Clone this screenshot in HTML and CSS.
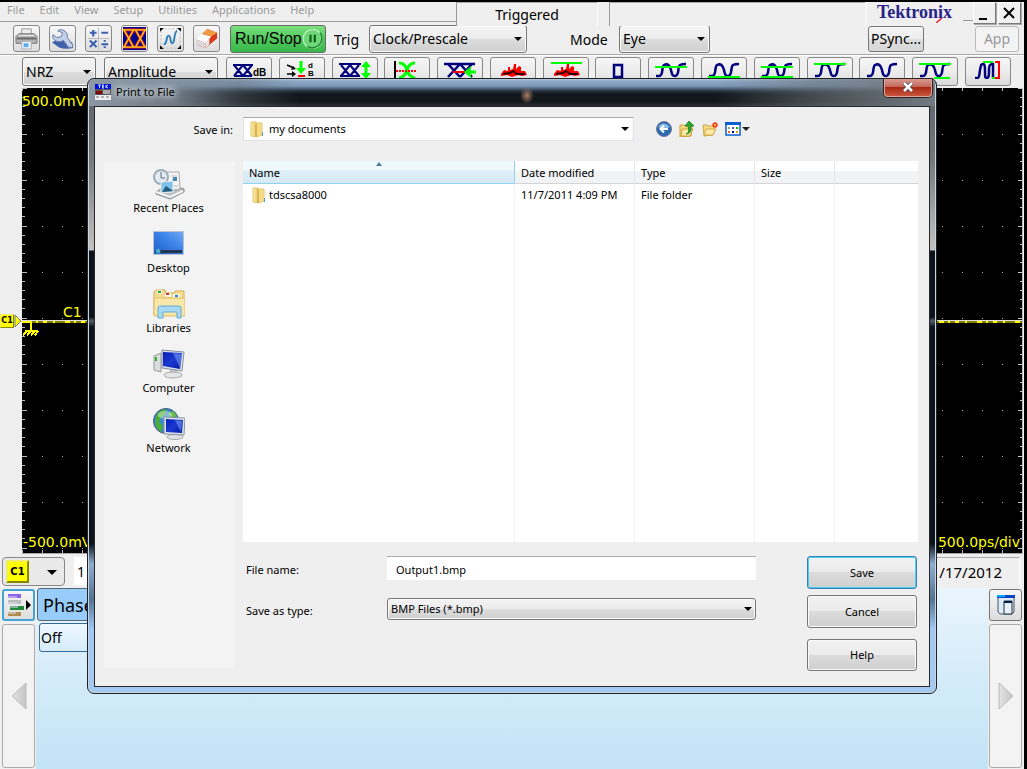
FILE: index.html
```html
<!DOCTYPE html>
<html lang="en">
<head>
<meta charset="utf-8">
<title>Print to File</title>
<link rel="stylesheet" href="styles.css">
</head>
<body>
<svg class="defs" aria-hidden="true">
  <defs>
    <linearGradient id="folderFill" x1="0" x2="1"><stop offset="0" stop-color="#fdf0b4"/><stop offset=".45" stop-color="#e8c664"/><stop offset="1" stop-color="#f9e498"/></linearGradient>
    <linearGradient id="screenFill" x1="0" y1="0" x2="1" y2="1"><stop offset="0" stop-color="#0a1fb4"/><stop offset=".5" stop-color="#1a38d0"/><stop offset="1" stop-color="#0718a0"/></linearGradient>
    <linearGradient id="deskFill" x1="0" y1="1" x2="1" y2="0"><stop offset="0" stop-color="#1a5cc8"/><stop offset=".6" stop-color="#3f86ea"/><stop offset="1" stop-color="#74aaf2"/></linearGradient>
    <linearGradient id="triFill"><stop offset="0" stop-color="#e4e4e4"/><stop offset="1" stop-color="#c4c4c4"/></linearGradient>
    <symbol id="folder" viewBox="0 0 14 17"><path d="M1 1h5l1 1h5v12l-5 2-6-1z" fill="url(#folderFill)" stroke="#e2c56e"/><path d="M6 3v13" stroke="#c9a040"/><path d="M7 3l3-1v13l-3 1z" fill="#f3d984"/><path d="M12.500 11v4" stroke="#4c9be0"/></symbol>
    <symbol id="wave" viewBox="0 0 34 18"><path d="M2 15h3c5 0 2-9 5-11 4-2 6 1 7 5s1 6 4 6c5 0 2-9 5-11 2-1 4-1 6-1" fill="none" stroke="#00007c" stroke-width="2.500"/></symbol>
    <symbol id="eye" viewBox="0 0 34 18"><path d="M1 3h31M5 3l12 13M17 3L5 16M17 3l12 13M29 3L17 16" fill="none" stroke="#00007c" stroke-width="2.500"/></symbol>
    <symbol id="noise" viewBox="0 0 34 18"><path d="M5 13l3-4 4 1V6h2v3l3-1 1-5h2v5l3-3 2 1v4h4l2 4-5 1-4-1-6 2-5-2-6 1z" fill="#f00"/><path d="M7 13l7-1 3-2 4 3h8" fill="none" stroke="#300" stroke-width="2"/></symbol>
  </defs>
</svg>
<div class="app">
  <header class="menubar">
    <nav class="menus"><button>File</button><button>Edit</button><button>View</button><button>Setup</button><button>Utilities</button><button>Applications</button><button>Help</button></nav>
    <div class="trig-state">Triggered</div>
    <div class="blank-state"></div>
    <div class="brand"><span class="logo">Tektronix<svg class="slash" viewBox="0 0 6 5"><path d="M0 5L6 0" stroke="#e8283c" stroke-width="1.500"/></svg></span>
      <span class="winbtns"><button class="winbtn" aria-label="Minimize"><svg viewBox="0 0 20 18"><path d="M5 15h8" stroke="#000" stroke-width="2"/></svg></button><button class="winbtn" aria-label="Close"><svg viewBox="0 0 20 18"><path d="M5 4l10 10M15 4L5 14" stroke="#000" stroke-width="2"/></svg></button></span>
    </div>
  </header>

  <div class="toolbar">
    <button class="tool" aria-label="Print"><svg viewBox="0 0 24 24"><path d="M7 2h10v8H7z" fill="#eee" stroke="#999"/><path d="M1 10l3-3h16l3 3v7H1z" fill="#b3b3b3" stroke="#777"/><path d="M2 11h20v2H2z" fill="#666"/><path d="M4 9h16" stroke="#eee"/><path d="M7 15h10v8H7z" fill="#e9f4ff" stroke="#aaa"/><path d="M9 17h5v4H9z" fill="#5aa9e8"/></svg></button>
    <button class="tool" aria-label="Setup"><svg viewBox="0 0 24 24"><path d="M1 16q11-7 21 0l1 6q-9 2-15-1z" fill="#3e62ad"/><path d="M2 8q-1 5 4 7 4 1 7-1l5 7q4 2 5-2l-6-8q1-6-5-8-3-1-5 1l5 2-1 4-5 1z" fill="#c3d0ea" stroke="#687aa5"/></svg></button>
    <button class="tool" aria-label="Math"><svg viewBox="0 0 24 24"><path d="M12 1v22M1 12h22" stroke="#bbb"/><path d="M3 6h7M6.500 3v7M15 6h7M3 14l7 7M10 14l-7 7M15 18h7M18.500 13.500v2M18.500 20v2" stroke="#3a5fb0" stroke-width="2.200"/></svg></button>
    <button class="tool" aria-label="Eye display"><svg viewBox="0 0 24 24"><path d="M0 0h24v24H0z" fill="#00008c"/><path d="M0 3h24M0 21h24M1 3l10 18M11 3L1 21M13 3l10 18M23 3L13 21" fill="none" stroke="#e21a1a" stroke-width="3"/><path d="M0 3h24M0 21h24M1 3l10 18M11 3L1 21M13 3l10 18M23 3L13 21" fill="none" stroke="#ffd21c" stroke-width="1.200"/></svg></button>
    <button class="tool" aria-label="Autoset"><svg viewBox="0 0 24 24"><path d="M2 2h20v20H2z" fill="none" stroke="#bbb" stroke-dasharray="2 2"/><path d="M5 18c4 0 2-9 5-9s1 8 4 8 1-12 5-13" fill="none" stroke="#2e7fb5" stroke-width="2"/><path d="M1 5V1h4zM19 1h4v4zM1 19v4h4zM23 19v4h-4z" fill="#000"/></svg></button>
    <button class="tool" aria-label="Clear"><svg viewBox="0 0 24 24"><path d="M2 14L13 2l10 4v6L11 22l-9-3z" fill="#d8391b"/><path d="M2 13l5-6 10 3-6 7z" fill="#fff"/><path d="M2 13l9 4v5l-9-3z" fill="#d8d8dd"/><path d="M7 7l6-5 10 4-6 4z" fill="#ef9a44"/><path d="M11 17l4-5v6l-4 4z" fill="#e8e8e8"/></svg></button>
    <button class="run">Run/Stop <svg viewBox="0 0 20 20"><circle cx="10" cy="10" r="9" fill="#6fd67a" stroke="#c9f3cc"/><path d="M17 4a9 9 0 0 1-12 13" fill="none" stroke="#1f8a30" stroke-width="1.500"/><path d="M8 6v7M12 6v7" stroke="#075e14" stroke-width="2"/></svg></button>
    <label class="lbl" for="trig">Trig</label>
    <span class="sel trig"><select id="trig"><option>Clock/Prescale</option></select></span>
    <label class="lbl mode-lbl" for="mode">Mode</label>
    <span class="sel mode"><select id="mode"><option>Eye</option></select></span>
    <button class="text-btn psync">PSync...</button>
    <button class="text-btn app-btn" disabled>App</button>
  </div>

  <div class="measbar">
    <span class="sel nrz"><select aria-label="Signal type"><option>NRZ</option></select></span>
    <span class="sel amp"><select aria-label="Measurement group"><option>Amplitude</option></select></span>
    <div class="meas">
      <button aria-label="Extinction ratio dB"><svg viewBox="0 0 34 18"><path d="M1 4h20M2 4l9 11M11 4L2 15M11 4l9 11M20 4l-9 11M2 15h18" fill="none" stroke="#00007c" stroke-width="2"/><text x="21" y="15" class="ic">dB</text></svg></button>
      <button aria-label="Ratio dB"><svg viewBox="0 0 34 18"><path d="M2 4l7 3M2 13h8" stroke="#000" stroke-width="1.500"/><path d="M11 8L6 9l2-4zM11 13l-4-3v6z"/><path d="M16 0v10" stroke="#0f0" stroke-width="3"/><path d="M11 7h10l-5 6z" fill="#0f0"/><path d="M13 15h7" stroke="red" stroke-width="2"/><text x="23" y="7" class="ic small">d</text><text x="23" y="15" class="ic small">B</text></svg></button>
      <button aria-label="Eye height"><svg viewBox="0 0 34 18"><path d="M1 3h22M3 4l9 11M12 4L3 15M12 4l9 11M21 4l-9 11M2 15h20" fill="none" stroke="#00007c" stroke-width="2"/><path d="M28 4v10" stroke="#0f0" stroke-width="3"/><path d="M23 6h10l-5-6zM23 12h10l-5 6z" fill="#0f0"/></svg></button>
      <button aria-label="Crossing"><svg viewBox="0 0 34 18"><path d="M5 0v18" stroke="#000" stroke-width="2"/><path d="M9 2q6 0 8 7t8 8M25 2q-6 0-8 7t-8 8" fill="none" stroke="#0f0" stroke-width="3"/><path d="M6 10h21" stroke="red" stroke-width="2" stroke-dasharray="2 1"/></svg></button>
      <button aria-label="Eye level"><svg viewBox="0 0 34 18"><use href="#eye" width="34" height="18"/><path d="M10 11h12" stroke="red" stroke-width="2"/><path d="M24 11h9" stroke="#0f0" stroke-width="3"/><path d="M21 11l7-6v12z" fill="#0f0"/></svg></button>
      <button aria-label="Noise"><svg viewBox="0 0 34 18"><use href="#noise" width="34" height="18"/></svg></button>
      <button aria-label="Peak noise"><svg viewBox="0 0 34 18"><use href="#noise" width="34" height="18"/><path d="M2 2h31" stroke="#0f0" stroke-width="2"/></svg></button>
      <button aria-label="Area"><svg viewBox="0 0 34 18"><path d="M13 4h8v12h-8z" fill="none" stroke="#00007c" stroke-width="2.500"/></svg></button>
      <button aria-label="Top level"><svg viewBox="0 0 34 18"><use href="#wave" width="34" height="18"/><path d="M1 6h32" stroke="#0f0" stroke-width="2"/></svg></button>
      <button aria-label="Base level"><svg viewBox="0 0 34 18"><use href="#wave" width="34" height="18"/><path d="M1 16h32" stroke="#0f0" stroke-width="2"/></svg></button>
      <button aria-label="Level width"><svg viewBox="0 0 34 18"><use href="#wave" width="34" height="18"/><path d="M1 6h32M1 16h32" stroke="#0f0" stroke-width="2"/></svg></button>
      <button aria-label="Maximum"><svg viewBox="0 0 34 18"><use href="#wave" width="34" height="18"/><path d="M1 3h32" stroke="#0f0" stroke-width="2"/></svg></button>
      <button aria-label="Waveform"><svg viewBox="0 0 34 18"><use href="#wave" width="34" height="18"/></svg></button>
      <button aria-label="Peak to peak"><svg viewBox="0 0 34 18"><use href="#wave" width="34" height="18"/><path d="M1 3h32M16 17h16" stroke="#0f0" stroke-width="2"/></svg></button>
      <button aria-label="Cycle"><svg viewBox="0 0 34 18"><path d="M4 17h2c3 0 2-3 3-8s1-6 3-6 2 3 2 8 0 6 2 6 2-3 2-8 1-6 4-6v14" fill="none" stroke="#00007c" stroke-width="2.500"/><path d="M12 1h10M21 17h6" stroke="#0f0" stroke-width="2"/><path d="M24 1h4v16h-4" fill="none" stroke="red" stroke-width="2"/></svg></button>
    </div>
  </div>

  <main class="scope-row">
    <div class="gutter"><span class="chan">C1</span><svg viewBox="0 0 8 14"><path d="M1 1l6 6-6 6z" fill="#ff0" stroke="#777"/></svg></div>
    <div class="scope">
      <svg class="graticule">
        <defs>
          <pattern id="dots" width="20" height="46" patternUnits="userSpaceOnUse"><rect width="1" height="1" fill="#aaa"/></pattern>
          <pattern id="left" width="6" height="46" patternUnits="userSpaceOnUse"><path d="M0 .5h5M0 9.500h3M0 18.500h3M0 27.500h3M0 36.500h3" stroke="#bbb"/></pattern>
          <pattern id="right" x="-6" width="6" height="46" patternUnits="userSpaceOnUse"><path d="M2 .5h4M4 9.500h2M4 18.500h2M4 27.500h2M4 36.500h2" stroke="#ccc"/></pattern>
          <pattern id="cols" width="20" height="4" patternUnits="userSpaceOnUse"><rect width="1" height="3" fill="#bbb"/></pattern>
          <pattern id="fuzz" width="38" height="2" patternUnits="userSpaceOnUse"><path d="M0 .5h38M5 1.500h5M14 1.500h2M21 1.500h4M31 1.500h2" stroke="#ff0"/></pattern>
        </defs>
        <rect width="100%" height="100%" fill="url(#dots)"/>
        <rect width="6" height="100%" fill="url(#left)"/>
        <rect width="100%" height="3" fill="url(#cols)"/>
        <svg y="100%" overflow="visible"><g transform="translate(0 -3)"><rect width="100%" height="3" fill="url(#cols)"/></g></svg>
        <svg x="100%" overflow="visible"><rect x="-6" width="6" height="465" fill="url(#right)"/></svg>
        <svg class="mid" y="50%" overflow="visible"><rect y="-1" width="100%" height="1" fill="#ddd"/><rect width="100%" height="2" fill="url(#fuzz)"/><path d="M0 1h10M9 1v9M3 10h13M5 10l-4 5M9 10l-4 5M13 10l-4 5M16 10l-3 5" fill="none" stroke="#ff0" stroke-width="2"/></svg>
      </svg>
      <span class="volts top">500.0mV</span>
      <span class="chan-name">C1</span>
      <div class="bottom-read"><span>-500.0mV</span><span>500.0ps/div</span></div>
    </div>
  </main>

  <div class="status">
    <button class="chan-pick" aria-label="Channel"><span class="chan big">C1</span></button>
    <input class="scale" aria-label="Scale" value="1">
    <span class="date">/17/2012</span>
  </div>

  <section class="lower">
    <div class="side">
      <button class="mini active" aria-label="Show list"><svg viewBox="0 0 24 24"><path d="M1 1h13v4H1z" fill="#8a63e8"/><path d="M1 7h13v4H1z" fill="#bbb"/><path d="M3 13h14v4H3z" fill="#208a3a"/><path d="M1 19h13v4H1z" fill="#b08d4c"/><path d="M1 4h9M1 10h9M3 14h8M1 20h8" stroke="#e5e0f5"/><path d="M19 7l5 5-5 5z"/></svg></button>
      <button class="scroll" aria-label="Scroll left"><svg viewBox="0 0 16 28"><path d="M15 1v26L1 14z" fill="url(#triFill)" stroke="#bbb"/></svg></button>
    </div>
    <div class="panel"><div class="phase">Phase</div><div class="off">Off</div></div>
    <div class="side">
      <button class="mini" aria-label="Windows"><svg viewBox="0 0 24 24"><path d="M4 3h16v16l-2 2H6l-2-2z" fill="#dcebf6" stroke="#456"/><path d="M3 2h18v3H3z" fill="#04c"/><path d="M3 2h8v2H3z" fill="#0af"/><path d="M10 8h8v13h-8z" fill="#e8f1f8" stroke="#234"/><path d="M10 8h8v2h-8z" fill="#024"/></svg></button>
      <button class="scroll" aria-label="Scroll right"><svg viewBox="0 0 16 28"><path d="M1 1v26l14-13z" fill="url(#triFill)" stroke="#bbb"/></svg></button>
    </div>
  </section>

  <div class="dialog" role="dialog" aria-labelledby="dlg-title">
    <div class="titlebar">
      <svg class="tek" viewBox="0 0 16 16"><path d="M0 0h16v5H0z" fill="#0010d8"/><path d="M3 1h3M4.500 1v3M7 1h2M7 2.500h2M7 4h2M7.500 1v3M11 1v3M13 1l-2 1.500 2 1.500" stroke="#cdf" fill="none"/><path d="M0 5h16v6H0z" fill="#555"/><path d="M1 7h6v3H1z" fill="#700"/><path d="M2 8h1M5 8h1" stroke="red"/><path d="M8 6h7v4H8z" fill="#aaa"/><path d="M0 11h16v5H0z" fill="#eee"/><path d="M1 13h14" stroke="#777" stroke-dasharray="3 2"/></svg>
      <h1 id="dlg-title">Print to File</h1>
      <i class="glint"></i>
      <button class="close" aria-label="Close"><svg viewBox="0 0 12 10"><path d="M2 1l8 8M10 1L2 9" stroke="#445" stroke-width="4"/><path d="M2 1l8 8M10 1L2 9" stroke="#fff" stroke-width="2.500"/></svg></button>
    </div>
    <form class="client">
      <div class="lookin">
        <label for="savein">Save in:</label>
        <span class="sel where"><svg class="folder"><use href="#folder"/></svg><select id="savein"><option>my documents</option></select></span>
        <div class="navbtns">
          <button type="button" aria-label="Back"><svg viewBox="0 0 16 16"><circle cx="8" cy="8" r="7.500" fill="#2a6ab0" stroke="#779"/><path d="M2 6q5-7 12 0-6 3-12 0z" fill="#8cbbe6"/><path d="M12 8H5M8 4.500L4.500 8 8 11.500" fill="none" stroke="#fff" stroke-width="2"/></svg></button>
          <button type="button" aria-label="Up one level"><svg viewBox="0 0 16 16"><path d="M1 4h4l1 1h7l-1 10-11 1z" fill="#f6dc7c" stroke="#caa03a"/><path d="M3 8h11l-3 7H2z" fill="#fbeaa4" stroke="#caa03a"/><path d="M7 13q4-1 2-8H6l4-5 5 5h-3q1 8-5 8z" fill="#25a82d" stroke="#15701c" stroke-width=".7"/></svg></button>
          <button type="button" aria-label="New folder"><svg viewBox="0 0 16 16"><path d="M1 4h4l1 1h6l-1 9-9 1z" fill="#f6dc7c" stroke="#d0a84a"/><path d="M4 8h10l-3 6H2z" fill="#fbeaa4" stroke="#d0a84a"/><path d="M13 1v6M10 4h6M11 2l4 4M15 2l-4 4" stroke="#f0402a" stroke-width="1.500"/><circle cx="13" cy="4" r="1" fill="#ffd43a"/></svg></button>
          <button type="button" class="views" aria-label="View menu"><svg viewBox="0 0 25 16"><path d="M1 2h14v12H1z" fill="#fff" stroke="#0a5fd0" stroke-width="1.500"/><path d="M0 1h16v3H0z" fill="#0a5fd0"/><path d="M3 6h2v2H3z" fill="#999"/><path d="M7 6h2v2H7z" fill="#55b"/><path d="M11 6h2v2h-2z" fill="#2a2"/><path d="M3 10h2v2H3z" fill="#e64"/><path d="M7 10h2v2H7z" fill="#008"/><path d="M11 10h2v2h-2z" fill="#e92"/><path d="M17 6h8l-4 4z" fill="#222"/></svg></button>
        </div>
      </div>
      <div class="body">
        <nav class="places">
          <button type="button"><svg viewBox="0 0 32 32"><path d="M3 24l12-8 16 5v3l-14 7-14-5z" fill="#b9bdc0" stroke="#888"/><path d="M13 4h13l1 17-13 2z" fill="#f5f5f5" stroke="#aaa"/><path d="M18 8h6M19 12h3M20 18h5" stroke="#bbb"/><path d="M20 9h4v4h-4z" fill="#48b"/><circle cx="8" cy="9" r="7" fill="#e4ebf0" stroke="#9eacb8" stroke-width="2"/><path d="M8 4v6h4" fill="none" stroke="#668"/><path d="M8 14l12-1v11l-12 1z" fill="#7fc2ee" stroke="#eee"/><path d="M9 24l4-6 7 5z" fill="#275b7a"/><path d="M3 24l14 5 13-6" fill="none" stroke="#f4f4f4" stroke-width="2"/></svg>Recent Places</button>
          <button type="button"><svg viewBox="0 0 32 32"><path d="M.5 3.500h30v23h-30z" fill="url(#deskFill)" stroke="#b8c2cc"/><path d="M2 22h27v3H2z" fill="#243550"/><circle cx="5" cy="23" r="2.500" fill="#39a6d8"/><path d="M5 23h1" stroke="#fc3"/></svg>Desktop</button>
          <button type="button"><svg viewBox="0 0 32 32"><path d="M1 4l2-2h9l1 3h8l1-2h9v24H1z" fill="#f2dc94" stroke="#d0ad4f"/><path d="M4 4h5M12 7h6M20 8h7" stroke="#fff" stroke-width="3"/><path d="M5 4h3" stroke="#2a3" stroke-width="2"/><path d="M13 6h3" stroke="#c33" stroke-width="2"/><path d="M22 8h3" stroke="#28c" stroke-width="2"/><path d="M1 10h31v18H1z" fill="#f8e7a8" stroke="#dcbc62"/><path d="M5 30V20q0-2 2-2h19q2 0 2 2v10h-4v-6H10v6z" fill="#a8d9f3" stroke="#65abd4"/></svg>Libraries</button>
          <button type="button"><svg viewBox="0 0 32 32"><path d="M1 8l7-3v19l-7-2z" fill="#dadde0" stroke="#999"/><path d="M3 9v4" stroke="#2b2" stroke-width="2"/><path d="M17 22h7l1 5h-9z" fill="#c5c9cc"/><ellipse cx="20" cy="27" rx="9" ry="3" fill="#e3e5e7" stroke="#aaa"/><path d="M9 2l22 2-2 19-20-3z" fill="#d9dfe7" stroke="#8791a0"/><path d="M10 4l19 1-2 16-17-3z" fill="url(#screenFill)"/><path d="M20 5l9 1-2 14z" fill="#7697f2" opacity=".6"/></svg>Computer</button>
          <button type="button"><svg viewBox="0 0 32 32"><circle cx="13" cy="13" r="12.500" fill="#358bcf" stroke="#457"/><path d="M4 6q5-6 10-4l-3 6-3 1-2 5 4 4-2 6Q-1 18 4 6z" fill="#4cae35"/><path d="M15 5l5-2 4 5-6 2z" fill="#69c149"/><ellipse cx="12" cy="7" rx="7" ry="4" fill="#fff" opacity=".4"/><ellipse cx="22" cy="29" rx="8" ry="2.500" fill="#dfe2e5" stroke="#aaa"/><path d="M11 9l21 1-1 17-20-1z" fill="#dce1e8" stroke="#8791a0"/><path d="M13 11l17 1-1 13-16-1z" fill="url(#screenFill)"/><path d="M22 12l7 1-1 11z" fill="#7697f2" opacity=".6"/></svg>Network</button>
        </nav>
        <div class="right">
          <div class="files">
            <table>
              <thead><tr><th class="c-name">Name</th><th class="c-date">Date modified</th><th class="c-type">Type</th><th class="c-size">Size</th><th></th></tr></thead>
              <tbody><tr class="file"><td><span class="entry"><svg class="folder"><use href="#folder"/></svg>tdscsa8000</span></td><td>11/7/2011 4:09 PM</td><td>File folder</td><td></td><td></td></tr>
              <tr><td></td><td></td><td></td><td></td><td></td></tr></tbody>
            </table>
          </div>
          <div class="save">
            <div class="fields">
              <label for="fname">File name:</label><input id="fname" value="Output1.bmp">
              <label for="ftype">Save as type:</label><span class="sel type"><select id="ftype"><option>BMP Files (*.bmp)</option></select></span>
            </div>
            <div class="actions"><button type="button" class="default">Save</button><button type="button">Cancel</button><button type="button" class="help">Help</button></div>
          </div>
        </div>
      </div>
    </form>
  </div>
</div>
</body>
</html>
```
FILE: styles.css
```css
* { box-sizing: border-box; }
body { margin: 0; font: 15px/20px "Noto Sans", sans-serif; color: #000; }
button, input, select { font: inherit; color: inherit; margin: 0; padding: 0; }
button { border: 0; background: none; }
.defs { position: absolute; width: 0; height: 0; }
.app { position: relative; min-height: 100vh; display: flex; flex-direction: column; background: #efefef; border-top: 2px solid #000; border-right: 3px solid #000; }

/* select boxes */
.sel { position: relative; display: flex; align-items: center; border: 1px solid #777; border-radius: 3px; background: linear-gradient(#f4f4f4, #ececec 50%, #dcdcdc 51%, #d0d0d0); box-shadow: inset 0 0 0 1px #fafafa; }
.sel select { appearance: none; flex: 1; min-width: 0; height: 100%; border: 0; background: none; padding: 0 3px; outline: 0; }
.sel::after { content: ""; position: absolute; right: 4px; top: 50%; margin-top: -2px; border: 4px solid transparent; border-top-color: #000; border-bottom: 0; pointer-events: none; }

/* menu bar */
.menubar { position: relative; z-index: 1; display: flex; height: 24px; margin-bottom: -4px; padding-right: 3px; align-items: flex-start; }
.menus { flex: 0 0 456px; height: 20px; display: flex; gap: 15px; padding-left: 7px; border-bottom: 1px solid #999; font-size: 11px; line-height: 16px; color: #9b9b9b; align-items: flex-start; }
.trig-state { flex: 0 0 142px; height: 24px; padding-top: 2px; text-align: center; font-size: 14px; background: #efefef; border-left: 1px solid #999; border-top: 1px solid #aaa; border-right: 1px solid #fff; }
.blank-state { flex: 1; height: 24px; margin-left: 11px; border-left: 1px solid #999; border-top: 1px solid #aaa; background: #efefef; }
.brand { flex: 0 0 156px; height: 24px; display: flex; justify-content: space-between; padding-left: 10px; background: #efefef; border-left: 2px solid #f8f8f8; }
.logo { position: relative; font: bold 18px/20px "Liberation Serif", serif; color: #272388; }
.slash { position: absolute; right: 10px; bottom: 3px; width: 6px; height: 5px; }
.winbtns { display: flex; gap: 2px; padding-left: 10px; background: linear-gradient(#999, #999) left 18px / 10px 1px no-repeat; }
.winbtn { width: 23px; height: 22px; border: 1px solid #fff; border-right-color: #777; border-bottom-color: #777; box-shadow: 1px 1px #aaa; background: #efefef; }
.winbtn svg { display: block; width: 20px; height: 18px; }

/* main toolbar */
.toolbar { display: flex; align-items: center; height: 33px; padding: 1px 5px 0 13px; border-bottom: 1px solid #aaa; box-shadow: 0 1px #fff; }
.tool { flex: none; width: 27px; height: 27px; margin-right: 9px; border: 1px solid #8a8a8a; border-radius: 3px; background: linear-gradient(#f8f8f8, #ddd); }
.tool svg { display: block; width: 23px; height: 23px; margin: auto; }
.run { flex: none; display: flex; align-items: center; justify-content: space-between; width: 96px; height: 28px; margin: 0 8px 0 1px; padding: 0 2px 0 4px; border: 1px solid #6b6b6b; border-radius: 3px; background: linear-gradient(#7be07f, #4fc95c 50%, #38b84b); font: 16px/24px "Liberation Sans", sans-serif; }
.run svg { width: 22px; height: 22px; }
.lbl { font-size: 14px; }
.toolbar .lbl { width: 35px; padding-top: 2px; }
.trig { width: 158px; height: 28px; font-size: 14px; }
.toolbar .mode-lbl { width: 49px; margin-left: 43px; }
.mode { width: 91px; height: 28px; font-size: 14px; }
.text-btn { height: 26px; border: 1px solid #777; border-radius: 3px; font-size: 14px; background: linear-gradient(#f4f4f4, #ececec 50%, #dedede 51%, #d6d6d6); }
.psync { width: 56px; margin-left: auto; }
.app-btn { width: 44px; margin-left: 51px; color: #999; border-color: #bbb; background: #f3f3f3; }

/* measurement bar */
.measbar { display: flex; height: 33px; padding: 2px 13px 2px 22px; gap: 8px; }
.nrz { flex: 0 0 74px; font-size: 14px; }
.amp { flex: 0 0 114px; font-size: 14px; }
.meas { flex: 1; display: flex; justify-content: space-between; }
.meas button { width: 46px; height: 29px; padding-bottom: 4px; border: 1px solid #888; border-radius: 3px; background: linear-gradient(#f6f6f6, #ececec 50%, #dadada); }
.meas svg { display: block; width: 34px; height: 18px; margin: 0 5px; }
.ic { font: bold 10px "Liberation Sans", sans-serif; }
.ic.small { font-size: 8px; }

/* scope */
.scope-row { flex: 1; display: flex; min-height: 465px; padding-right: 1px; }
.gutter { flex: 0 0 22px; display: flex; align-items: center; }
.gutter svg { width: 8px; height: 14px; }
.chan { width: 14px; font: bold 8px/12px "DejaVu Sans", sans-serif; text-align: center; background: #ff0; border: 1px solid #ee6; border-right-color: #880; border-bottom-color: #880; }
.scope { flex: 1; position: relative; display: flex; flex-direction: column; background: #000; color: #ff0; border-right: 1px solid #bbb; border-bottom: 1px solid #aaa; font: 14px/18px "DejaVu Sans", sans-serif; }
.graticule { position: absolute; inset: 0; width: 100%; height: 100%; }
.mid { shape-rendering: crispEdges; }
.volts { position: relative; padding-top: 4px; }
.chan-name { position: absolute; left: 41px; top: 50%; margin-top: -18px; }
.bottom-read { position: relative; margin-top: auto; display: flex; justify-content: space-between; padding: 0 2px 2px 1px; }

/* status row */
.status { display: flex; align-items: center; height: 34px; padding: 2px 4px 2px 2px; gap: 9px; }
.chan-pick { position: relative; width: 63px; height: 29px; padding-left: 3px; border: 1px solid #888; border-radius: 4px; background: #e9e9e9; }
.chan-pick::after { content: ""; position: absolute; right: 7px; top: 12px; border: 5px solid transparent; border-top-color: #000; border-bottom: 0; }
.chan.big { display: block; width: 23px; border-width: 2px; font-size: 10px; line-height: 19px; }
.scale { width: 60px; height: 28px; border: 0; padding-left: 3px; font-size: 14px; background: #fff; }
.date { flex: 1; height: 29px; padding: 4px 17px 0 0; text-align: right; font-size: 15px; border-top: 1px solid #aaa; border-right: 1px solid #fff; }

/* lower panel */
.lower { display: flex; min-height: 181px; padding: 0 2px; gap: 1px; }
.side { flex: 0 0 33px; display: flex; flex-direction: column; gap: 3px; padding: 1px 0; }
.mini { height: 32px; border: 1px solid #777; border-radius: 3px; background: linear-gradient(#f6f6f6, #ddd); }
.mini.active { border: 2px solid #42a5d5; }
.mini svg { display: block; width: 24px; height: 24px; margin: auto; }
.scroll { flex: 1; border: 1px solid #aaa; border-radius: 3px; background: #f3f3f3; }
.scroll svg { display: block; width: 16px; height: 28px; margin: auto; }
.panel { flex: 1; padding-left: 1px; background: linear-gradient(#eaf5fd, #d0eaf8 60%, #c2e3f5); }
.phase { height: 33px; width: 120px; padding: 6px 5px; font-size: 18px; border: 1px solid #567; border-radius: 3px; background: #98cdfb; }
.off { height: 29px; width: 118px; margin: 2px; padding: 4px 1px; font-size: 14px; border: 1px solid #376a94; border-radius: 3px; background: linear-gradient(#eef8ff, #d4ebf9); }

/* dialog window */
.dialog { position: absolute; z-index: 2; left: 87px; right: 87px; top: 76px; padding: 0 6px 6px; border: 1px solid #1d242b; border-radius: 7px; box-shadow: inset 0 0 0 1px #c9d4de; font-size: 11px; line-height: 16px;
  background: linear-gradient(#596269 0, #74787b 80px, #c2c2c2 171px, #0c131b 172px, #0c131b 238px, #555d66 242px, #0c131b 248px, #0c131b 465px, #8faed0 485px, #55728f 520px, #a0c8f4 550px, #a5caf1); }
.titlebar { position: relative; display: flex; align-items: center; gap: 5px; height: 27px; margin: 0 -5px; padding: 0 3px 2px 6px; border-radius: 6px 6px 0 0;
  background: linear-gradient(90deg, #8c98a4 0, #818d99cc 90px, #5e686f66 150px, transparent 210px, transparent 74%, #6b747a88 85%, #737b82 100%), linear-gradient(#b9c9da 0, #8faac8 2px, #7d98b8 7px, #26323f 12px, #12171c 15px, #12171c 23px, #2a3036); }
.tek { width: 16px; height: 16px; }
.titlebar h1 { margin: 0; font: 11px/16px "Noto Sans", sans-serif; text-shadow: 0 0 6px #dde3e8, 0 0 8px #dde3e8, 0 0 10px #dde3e8; }
.glint { position: absolute; left: 51%; top: 8px; width: 14px; height: 17px; background: radial-gradient(#a67c64, transparent 70%); }
.close { align-self: flex-start; margin-left: auto; width: 48px; height: 18px; border: 1px solid #d7a69d; border-top: 0; border-radius: 0 0 4px 4px; background: linear-gradient(#d89a90, #c36458 48%, #a82813 50%, #c8563c); box-shadow: 0 0 0 1px #33211f; }
.close svg { display: block; width: 12px; height: 10px; margin: 0 auto 2px; }
.client { border: 1px solid #26282b; background: #efefef; padding: 10px 11px 15px 9px; }
.lookin { display: flex; align-items: center; height: 24px; margin-bottom: 20px; }
.lookin label { width: 139px; padding: 1px 10px 0 0; text-align: right; }
.where { width: 391px; height: 24px; padding-left: 6px; background: #fff; border: 1px solid #e0e3ea; border-top-color: #aaa; border-radius: 0; }
.where select { padding-left: 5px; }
.folder { display: block; width: 14px; height: 17px; }
.navbtns { display: flex; gap: 7px; margin-left: 22px; }
.navbtns svg { display: block; width: 16px; height: 16px; }
.navbtns .views svg { width: 25px; }
.body { display: flex; gap: 8px; }
.places { flex: 0 0 131px; display: flex; flex-direction: column; margin: 1px 0 3px; padding: 6px 2px 0 0; background: #f3f3f3; }
.places button { height: 60px; display: flex; flex-direction: column; align-items: center; justify-content: flex-start; }
.places svg { width: 32px; height: 32px; }
.right { flex: 1; min-width: 0; }
.files { height: 381px; background: #fff; }
.files table { width: 100%; height: 100%; border-collapse: separate; border-spacing: 0; table-layout: fixed; }
.files th { height: 23px; padding: 1px 0 0 6px; text-align: left; font-weight: normal; border-right: 1px solid #e2e5e8; border-bottom: 1px solid #d5d5d5; background: linear-gradient(#fff 45%, #f2f3f5 46%); }
.files th:last-child, .files td:last-child { border-right: 0; }
.files .c-name { position: relative; width: 272px; border-right-color: #8fd2f2; border-bottom-color: #8fd2f2; background: linear-gradient(#f0f9fd 40%, #dff0f9 41%, #d6e9f4); }
.c-name::after { content: ""; position: absolute; left: 133px; top: 1px; border: 3px solid transparent; border-bottom: 4px solid #4a7d9f; border-top: 0; }
.c-date, .c-type { width: 120px; }
.c-size { width: 80px; }
.files td { padding: 0 0 0 6px; border-right: 1px solid #edf4fd; }
.file td { height: 22px; }
.entry { display: flex; align-items: center; gap: 3px; padding-left: 3px; }
.save { display: flex; gap: 51px; margin-top: 14px; padding-right: 1px; }
.fields { flex: 1; display: grid; grid-template-columns: 144px 1fr; grid-template-rows: 24px 23px; row-gap: 17px; align-content: start; }
.fields label { align-self: center; padding: 4px 0 0 3px; }
.fields label + .type { margin-top: 1px; }
.fields input { min-width: 0; padding: 2px 8px 0 9px; border: 0; border-top: 1px solid #aaa; background: #fff; outline: 0; }
.type::after { right: 3px; }
.actions { flex: 0 0 110px; display: flex; flex-direction: column; gap: 6px; }
.actions button { height: 33px; border: 1px solid #777; border-radius: 3px; background: linear-gradient(#f2f2f2, #ebebeb 49%, #dcdcdc 50%, #cfcfcf); box-shadow: inset 0 0 0 1px #fafafa; }
.actions .default { border-color: #3c7fb1; box-shadow: inset 0 0 0 1px #45d1f5; }
.actions .help { height: 32px; margin-top: 5px; }
```
